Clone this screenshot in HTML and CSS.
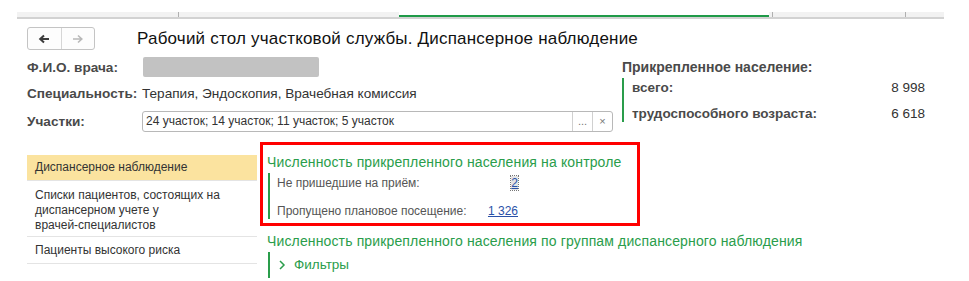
FILE: index.html
```html
<!DOCTYPE html>
<html lang="ru">
<head>
    <meta charset="UTF-8">
    <title>Рабочий стол участковой службы</title>
    <link rel="stylesheet" href="styles.css">
</head>
<body>
    <div class="tabs">
        <div class="tab tab-1"></div>
        <div class="tab tab-2"></div>
        <div class="tab tab-active"></div>
        <div class="tab tab-4"></div>
        <div class="tab tab-5"></div>
    </div>

    <div class="header">
        <div class="nav">
            <div class="nav-btn">
                <svg width="12" height="10" viewBox="0 0 12 10"><path d="M11 5 H2.5 M6 1.5 L2.2 5 L6 8.5" fill="none" stroke="#3c3c3c" stroke-width="2"/></svg>
            </div>
            <div class="nav-btn">
                <svg width="12" height="10" viewBox="0 0 12 10"><path d="M1 5 H9.5 M6 1.5 L9.8 5 L6 8.5" fill="none" stroke="#b8b8b8" stroke-width="1.6"/></svg>
            </div>
        </div>
        <div class="page-title">Рабочий стол участковой службы. Диспансерное наблюдение</div>
    </div>

    <div class="top">
        <div class="form">
            <div class="row row-fio">
                <div class="label">Ф.И.О. врача:</div>
                <div class="redacted"></div>
            </div>
            <div class="row row-spec">
                <div class="label">Специальность:</div>
                <div class="value">Терапия, Эндоскопия, Врачебная комиссия</div>
            </div>
            <div class="row row-uch">
                <div class="label">Участки:</div>
                <div class="input">
                    <div class="input-text">24 участок; 14 участок; 11 участок; 5 участок</div>
                    <div class="input-btn">...</div>
                    <div class="input-btn">&#215;</div>
                </div>
            </div>
        </div>

        <div class="population">
            <div class="pop-title">Прикрепленное население:</div>
            <div class="pop-list">
                <div class="pop-row"><span>всего:</span><span class="num">8 998</span></div>
                <div class="pop-row"><span>трудоспособного возраста:</span><span class="num">6 618</span></div>
            </div>
        </div>
    </div>

    <div class="main">
        <div class="menu">
            <div class="menu-item selected">Диспансерное наблюдение</div>
            <div class="menu-item multi">Списки пациентов, состоящих на диспансерном учете у <span class="nowrap">врачей-специалистов</span></div>
            <div class="menu-item">Пациенты высокого риска</div>
        </div>

        <div class="content">
            <div class="control-box">
                <div class="group-title">Численность прикрепленного населения на контроле</div>
                <div class="group-body">
                    <div class="stat-row">
                        <span class="stat-label">Не пришедшие на приём:</span>
                        <span class="stat-value"><a href="#" class="focused">2</a></span>
                    </div>
                    <div class="stat-row">
                        <span class="stat-label">Пропущено плановое посещение:</span>
                        <span class="stat-value"><a href="#">1 326</a></span>
                    </div>
                </div>
            </div>

            <div class="groups">
                <div class="group-title">Численность прикрепленного населения по группам диспансерного наблюдения</div>
                <div class="filters">
                    <svg class="chevron" width="8" height="10" viewBox="0 0 8 10"><path d="M2 1 L6 5 L2 9" fill="none" stroke="#2a9d4b" stroke-width="1.5"/></svg>
                    <span>Фильтры</span>
                </div>
            </div>
        </div>
    </div>
</body>
</html>
```

FILE: styles.css
```css
body {
    margin: 0;
    padding: 0;
    background-color: #fff;
    font-family: 'Liberation Sans', Arial, sans-serif;
    color: #333;
}

/* полоса вкладок */
.tabs {
    display: flex;
    margin: 12px 0 0 17px;
    width: 927px;
    height: 5px;
    background-color: #f2f2f2;
    border-bottom: 2px solid #d2d2d2;
}

.tab {
    height: 5px;
    border-left: 1px solid #b0b0b0;
}

.tab-1 {
    width: 161px;
    border-left: none;
}

.tab-2 {
    width: 217px;
}

.tab-active {
    width: 370px;
    height: 3px;
    margin: 0 3px 0 3px;
    border-left: none;
    background-color: #fff;
    border-bottom: 2px solid #1f9a48;
}

.tab-4 {
    width: 132px;
}

.tab-5 {
    flex: 1;
}

/* заголовок */
.header {
    display: flex;
    align-items: center;
    margin: 8px 0 0 27px;
    height: 23px;
}

.nav {
    display: flex;
    width: 66px;
    height: 21px;
    border: 1px solid #c4c4c4;
    border-radius: 3px;
    background-color: #fdfdfd;
}

.nav-btn {
    display: flex;
    align-items: center;
    justify-content: center;
    width: 33px;
}

.nav-btn + .nav-btn {
    border-left: 1px solid #d6d6d6;
}

.page-title {
    margin-left: 42px;
    font-size: 17px;
    letter-spacing: 0.2px;
    color: #111;
}

/* шапка с полями */
.top {
    display: flex;
    margin: 7px 0 0 27px;
}

.form {
    width: 586px;
}

.row {
    display: flex;
    align-items: center;
}

.label {
    width: 115px;
    flex: none;
    font-size: 13.6px;
    font-weight: bold;
    color: #4a4a4a;
}

.row-fio {
    height: 20px;
}

.redacted {
    width: 176px;
    height: 20px;
    margin-left: 1px;
    background-color: #c2c2c2;
    border-radius: 2px;
}

.row-spec {
    margin-top: 8px;
    height: 16px;
}

.value {
    font-size: 13.6px;
    color: #333;
}

.row-uch {
    margin-top: 10px;
}

.input {
    display: flex;
    width: 469px;
    height: 19px;
    border: 1px solid #b8b8b8;
    border-radius: 3px;
    background-color: #fff;
}

.input-text {
    flex: 1;
    padding-left: 3px;
    font-size: 12px;
    line-height: 19px;
    color: #333;
}

.input-btn {
    width: 19px;
    border-left: 1px solid #d0d0d0;
    text-align: center;
    font-size: 11px;
    line-height: 18px;
    color: #777;
}

.population {
    width: 303px;
    margin-left: 9px;
    padding-top: 2px;
}

.pop-title {
    font-size: 14px;
    font-weight: bold;
    line-height: 16px;
    color: #4a4a4a;
}

.pop-list {
    margin-top: 3px;
    padding-left: 8px;
    border-left: 2px solid #2a9d4b;
}

.pop-row {
    display: flex;
    justify-content: space-between;
    align-items: center;
    height: 18px;
    font-size: 13.5px;
    font-weight: bold;
    color: #4a4a4a;
}

.pop-row + .pop-row {
    margin-top: 8px;
}

.pop-row .num {
    font-weight: normal;
    color: #333;
}

/* нижняя часть */
.main {
    display: flex;
    margin: 10px 0 0 27px;
}

.menu {
    width: 230px;
    margin-top: 13px;
}

.menu-item {
    padding: 0 8px;
    height: 26px;
    line-height: 26px;
    font-size: 12px;
    color: #333;
    border-bottom: 1px solid #e4e4e4;
}

.menu-item.selected {
    height: 25px;
    line-height: 25px;
    background-color: #fbe39f;
}

.menu-item.multi {
    height: auto;
    padding: 7px 8px 3px 8px;
    line-height: 15px;
}

.nowrap {
    white-space: nowrap;
}

.content {
    margin-left: 3px;
}

.control-box {
    width: 370px;
    height: 77px;
    border: 3px solid #ff0000;
    padding-left: 4px;
    padding-top: 1px;
}

.group-title {
    font-size: 14px;
    letter-spacing: 0.14px;
    line-height: 18px;
    color: #2a9d4b;
    padding-top: 7px;
    white-space: nowrap;
}

.group-body {
    margin: 2px 0 0 1px;
    padding: 2px 0 0 7px;
    border-left: 2px solid #2a9d4b;
}

.stat-row {
    display: flex;
    height: 16px;
    line-height: 16px;
    font-size: 12px;
    color: #555;
}

.stat-row + .stat-row {
    margin-top: 12px;
}

.stat-label {
    width: 200px;
}

.stat-value {
    width: 41px;
    text-align: right;
}

.stat-value a {
    color: #2a52a8;
    text-decoration: underline;
}

.stat-value a.focused {
    outline: 1px dotted #777;
    background-color: #e4e4e4;
}

.groups {
    padding-left: 7px;
}

.groups .group-title {
    padding-top: 6px;
}

.filters {
    display: flex;
    align-items: center;
    margin: 2px 0 0 1px;
    padding: 5px 0 6px 8px;
    border-left: 2px solid #2a9d4b;
    font-size: 13.5px;
    color: #2a9d4b;
}

.chevron {
    margin-right: 8px;
}
```
